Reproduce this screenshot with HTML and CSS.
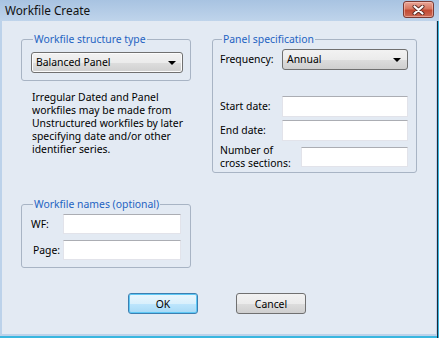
FILE: index.html
```html
<!DOCTYPE html>
<html lang="en">
<head>
  <meta charset="UTF-8">
  <title>Workfile Create</title>
  <link rel="stylesheet" href="styles.css">
</head>
<body>
  <div class="window">
    <div class="titlebar">
      <span class="title">Workfile Create</span>
      <div class="close">
        <svg width="13" height="10" viewBox="0 0 13 10">
          <path d="M2.5 1.5 L10.5 8.5 M10.5 1.5 L2.5 8.5" stroke="#5a2a24" stroke-width="4" stroke-linecap="round"/>
          <path d="M2.5 1.5 L10.5 8.5 M10.5 1.5 L2.5 8.5" stroke="#fff" stroke-width="2.2" stroke-linecap="round"/>
        </svg>
      </div>
    </div>

    <div class="client">
      <div class="columns">
        <div class="left">
          <fieldset class="group structure">
            <legend>Workfile structure type</legend>
            <div class="combo focused"><span>Balanced Panel</span><span class="arrow"></span></div>
          </fieldset>

          <p class="note">Irregular Dated and Panel<br>workfiles may be made from<br>Unstructured workfiles by later<br>specifying date and/or other<br>identifier series.</p>

          <fieldset class="group names">
            <legend>Workfile names (optional)</legend>
            <div class="field">
              <label>WF:</label>
              <input type="text">
            </div>
            <div class="field">
              <label class="indent">Page:</label>
              <input type="text">
            </div>
          </fieldset>
        </div>

        <fieldset class="group panel">
          <legend>Panel specification</legend>
          <div class="field">
            <label>Frequency:</label>
            <div class="combo"><span>Annual</span><span class="arrow"></span></div>
          </div>
          <div class="field dates">
            <label>Start date:</label>
            <input type="text">
          </div>
          <div class="field">
            <label>End date:</label>
            <input type="text">
          </div>
          <div class="field cross">
            <label>Number of<br>cross sections:</label>
            <input type="text">
          </div>
        </fieldset>
      </div>

      <div class="actions">
        <button class="default">OK</button>
        <button>Cancel</button>
      </div>
    </div>
  </div>
</body>
</html>
```

FILE: styles.css
```css
body {
  margin: 0;
  font-family: "Noto Sans", "Liberation Sans", sans-serif;
  font-size: 10.4px;
  line-height: 13px;
  color: #000;
}

.window {
  width: 439px;
  height: 338px;
  box-sizing: border-box;
  background: #bcd2ea;
  box-shadow: inset -1px 0 0 #3ab6df, inset -2px 0 0 #1c2a3a, inset 0 -2px 0 #3ab6df;
  display: flex;
  flex-direction: column;
}

.titlebar {
  height: 21px;
  display: flex;
  justify-content: space-between;
  align-items: flex-start;
  padding-left: 5px;
  background: linear-gradient(#a8c3e1, #bfd4eb);
}

.title {
  font-size: 11.8px;
  line-height: 20px;
  color: #111;
}

.close {
  width: 31px;
  height: 17px;
  margin: 1px 5px 0 0;
  box-sizing: border-box;
  border: 1px solid #7a3a33;
  border-radius: 3px;
  background: linear-gradient(#e8a699 0%, #d7775f 45%, #c24a33 55%, #cc6a55 100%);
  box-shadow: inset 0 0 0 1px rgba(255, 210, 200, 0.5);
  display: flex;
  justify-content: center;
  align-items: center;
}

.client {
  flex: 1;
  margin: 0 3px 4px 2px;
  background: #e3eaf3;
  padding: 12px 0 0 19px;
}

.columns {
  display: flex;
  gap: 21px;
  align-items: flex-start;
}

.left {
  width: 170px;
}

.group {
  margin: 0;
  border: 1px solid #a8b4c4;
  border-radius: 3px;
  box-sizing: border-box;
}

.group legend {
  color: #2463c2;
  padding: 0 1px;
  margin-left: 2px;
  line-height: 13px;
}

.structure {
  width: 170px;
  height: 48px;
  padding: 6px 0 0 9px;
}

.combo {
  height: 21px;
  box-sizing: border-box;
  border: 1px solid #707070;
  border-radius: 3px;
  background: linear-gradient(#f2f2f2 0%, #ebebeb 50%, #dddddd 51%, #cfcfcf 100%);
  display: flex;
  align-items: center;
  justify-content: space-between;
  padding: 0 6px 0 4px;
}

.structure .combo {
  width: 152px;
}

.combo.focused {
  box-shadow: inset 0 0 0 1px #fbfbfb;
}

.arrow {
  width: 0;
  height: 0;
  border-left: 4px solid transparent;
  border-right: 4px solid transparent;
  border-top: 4px solid #000;
}

.note {
  margin: 10px 0 0 11px;
  white-space: nowrap;
}

.names {
  width: 170px;
  height: 70px;
  margin-top: 42px;
  padding: 3px 0 0 9px;
}

.field {
  display: flex;
  align-items: center;
}

.field label {
  width: 32px;
}

.field label.indent {
  width: 30px;
  padding-left: 2px;
}

.names .field + .field {
  margin-top: 6px;
}

input {
  width: 118px;
  height: 20px;
  box-sizing: border-box;
  margin: 0;
  border: 1px solid #e2e3ea;
  border-top-color: #abadb3;
  background: #fff;
}

.panel {
  width: 205px;
  height: 140px;
  padding: 3px 0 0 7px;
}

.panel .field label {
  width: 62px;
}

.panel .combo {
  width: 126px;
}

.panel input {
  width: 126px;
  height: 21px;
}

.panel .dates {
  margin-top: 26px;
}

.panel .field + .field:not(.dates) {
  margin-top: 3px;
}

.panel .cross {
  margin-top: 4px;
}

.panel .cross label {
  width: 81px;
  white-space: nowrap;
}

.panel .cross input {
  width: 107px;
  height: 20px;
}

.actions {
  display: flex;
  gap: 38px;
  margin-top: 25px;
  padding-left: 107px;
}

button {
  width: 70px;
  height: 21px;
  font-family: inherit;
  font-size: 10.4px;
  border: 1px solid #707070;
  border-radius: 3px;
  background: linear-gradient(#f2f2f2 0%, #ebebeb 50%, #dddddd 51%, #cfcfcf 100%);
  padding: 0;
}

button.default {
  border-color: #3c7fb1;
  box-shadow: inset 0 0 0 1px #5ec8f5;
  background: linear-gradient(#eaf6fd 0%, #d9f0fc 50%, #bee6fd 51%, #a7d9f5 100%);
}
```
